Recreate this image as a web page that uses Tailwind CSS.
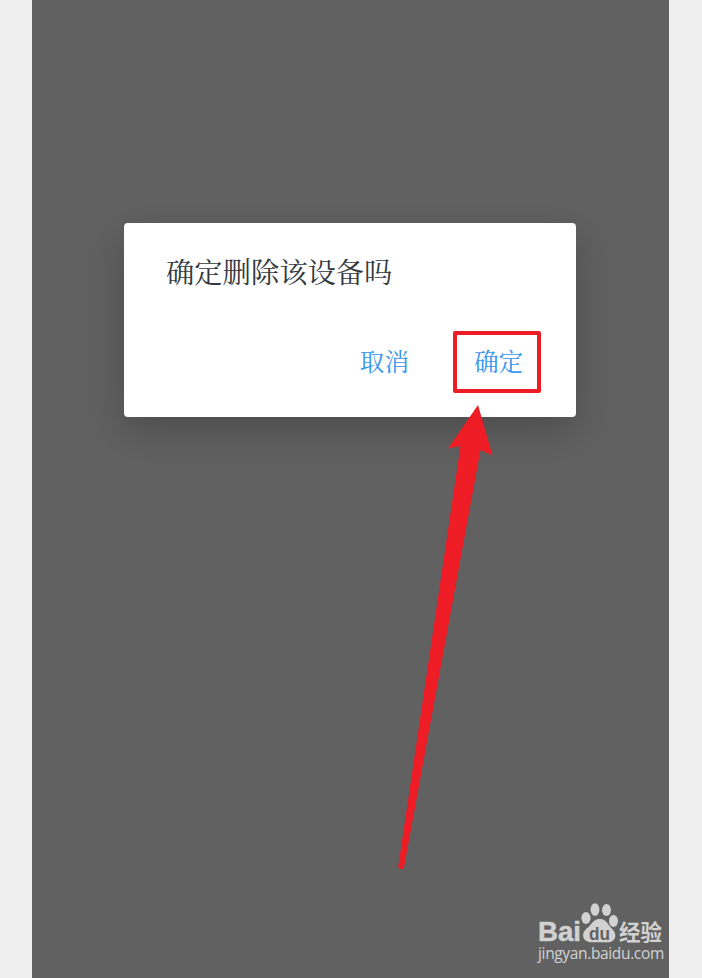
<!DOCTYPE html>
<html lang="zh-CN">
<head>
    <meta charset="UTF-8">
    <meta name="viewport" content="width=device-width, initial-scale=1.0">
    <title>确定删除该设备吗</title>
    <script src="https://cdn.jsdelivr.net/npm/@tailwindcss/browser@4"></script>
</head>
<body class="bg-[#efefef]">
    <div class="relative w-[702px] h-[978px] pl-8 overflow-hidden">
        <main class="w-[637px] h-full bg-[#616161] pt-[222.5px] pl-[92px]">
            <!-- Dialog -->
            <div class="w-[452px] h-[194.5px] bg-white rounded-[4px] shadow-[0_14px_40px_rgba(0,0,0,0.22)] flex flex-col font-['Noto_Serif_CJK_SC','Noto_Sans_CJK_SC',serif]">
                <h1 class="pt-[28.5px] pl-[42px] text-[28.3px] leading-[40px] text-[#32383e] whitespace-nowrap">确定删除该设备吗</h1>
                <div class="mt-[39.5px] pr-[35px] flex justify-end items-center gap-[43px] text-[24.6px] leading-none text-[#3796ed]">
                    <button type="button" class="pb-px pr-px">取消</button>
                    <button type="button" class="w-[88px] h-[62px] border-4 border-[#ee1c25] rounded-[2px] pb-px pl-[3px]">确定</button>
                </div>
            </div>
        </main>

        <!-- Arrow pointing at the confirm button -->
        <svg class="absolute left-0 top-0 pointer-events-none" width="702" height="978" viewBox="0 0 702 978" fill="#ee1c25">
            <path d="M478 405L492.500 455.500L480.500 450L404 867.500Q403.500 869 401.500 869Q398 869 398.300 866L460.500 446L448 448.500Z"/>
        </svg>

        <!-- Watermark -->
        <div class="absolute left-[538px] top-[900px] text-[#d2d2d2]">
            <svg class="overflow-visible" width="128" height="44" viewBox="0 0 128 44" fill="currentColor">
                <text x="0" y="41" font-family="Liberation Sans, sans-serif" font-size="28" font-weight="700" textLength="43" lengthAdjust="spacingAndGlyphs" stroke="currentColor" stroke-width=".5">Bai</text>
                <ellipse cx="48" cy="18" rx="4.600" ry="6"/>
                <ellipse cx="57" cy="9.500" rx="4.400" ry="6.300"/>
                <ellipse cx="68.500" cy="10" rx="4.500" ry="6"/>
                <ellipse cx="75.500" cy="21" rx="4.500" ry="6"/>
                <path d="M61.500 19C56 19 54 23.500 50 27.500C46 30.500 45 33 45.200 36C45.500 40 49 42.300 54 42.300H69.500C75 42.300 77.500 39 77.300 35C77 30.500 73 28.500 70.500 24.500C68 21 66 19 61.500 19Z"/>
                <text x="51" y="39.500" font-family="Liberation Sans, sans-serif" font-size="18.500" font-weight="700" fill="#616161" textLength="21" lengthAdjust="spacingAndGlyphs">du</text>
                <text x="81" y="39.500" font-family="Noto Sans CJK SC, sans-serif" font-size="22" font-weight="700" textLength="43" lengthAdjust="spacingAndGlyphs">经验</text>
            </svg>
            <p class="-mt-px font-['Open_Sans','Noto_Sans',sans-serif] text-[15.5px] leading-[20px] tracking-[-0.35px] whitespace-nowrap">jingyan.baidu.com</p>
        </div>
    </div>
</body>
</html>
